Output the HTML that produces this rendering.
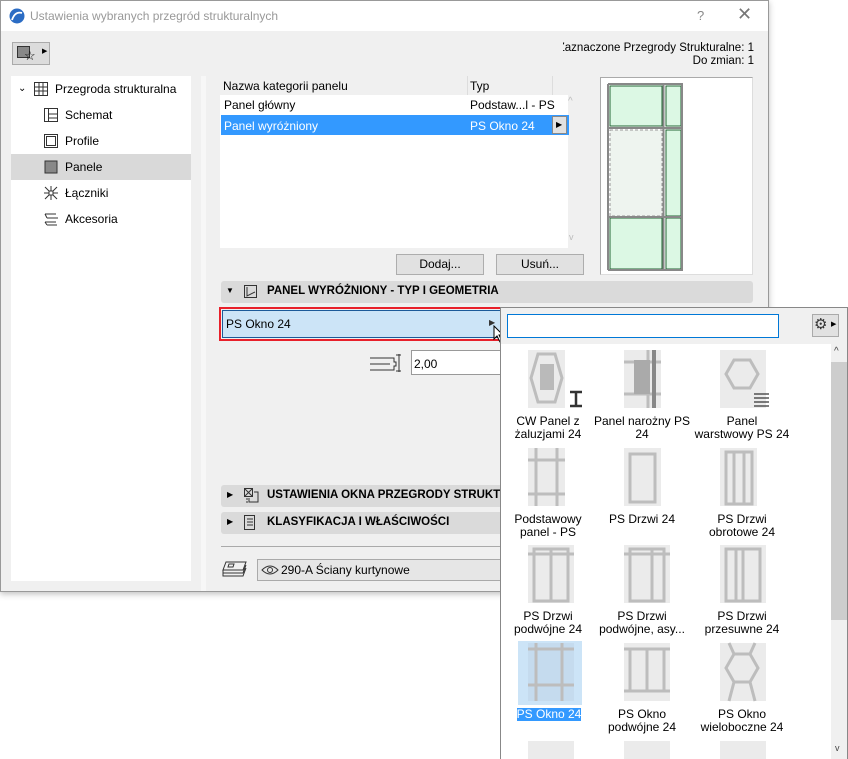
<!DOCTYPE html>
<html><head><meta charset="utf-8">
<style>
*{box-sizing:border-box;margin:0;padding:0}
body{width:848px;height:759px;background:#fff;position:relative;overflow:hidden;font-family:"Liberation Sans",sans-serif;font-size:12px;color:#000}
.a{position:absolute}
.t{position:absolute;white-space:nowrap;font-size:12px}
.hdr{position:absolute;background:#dadada;border-radius:3px;height:22px;font-weight:bold;font-size:11.5px}
.btn{position:absolute;background:#e1e1e1;border:1px solid #adadad;text-align:center;line-height:18px}
.lbl{position:absolute;width:100px;text-align:center;font-size:12px;line-height:13px}
</style></head><body>
<div class="a" style="left:0;top:0;width:769px;height:592px;background:#f0f0f0;border:1px solid #999;box-shadow:0 2px 6px rgba(0,0,0,.25)"></div>
<div class="a" style="top:1px;left:1px;width:767px;height:30px;background:#fff"></div>
<svg class="a" style="left:9px;top:8px" width="16" height="16"><circle cx="8" cy="8" r="7.5" fill="#2b6cc4"/><path d="M3 12 Q6 3 13 5" stroke="#fff" stroke-width="1.8" fill="none"/></svg>
<div class="t" style="left:30px;top:9px;color:#999;font-size:12px">Ustawienia wybranych przegród strukturalnych</div>
<div class="t" style="left:697px;top:8px;color:#888;font-size:13px">?</div>
<div class="t" style="left:737px;top:4px;color:#777;font-size:18px">✕</div>
<div class="a" style="left:12px;top:42px;width:38px;height:23px;background:#dcdcdc;border:1px solid #aaa"></div>
<div class="a" style="left:17px;top:46px;width:13px;height:12px;background:#888;border:1px solid #333"></div>
<div class="t" style="left:24px;top:48px;font-size:13px">☆</div>
<div class="t" style="left:42px;top:47px;font-size:7px">▶</div>
<div class="t" style="left:563px;top:42px;width:191px;text-align:right;font-size:11.5px;overflow:hidden;direction:rtl">Zaznaczone Przegrody Strukturalne: 1</div>
<div class="t" style="left:600px;top:55px;width:154px;text-align:right;font-size:11.5px">Do zmian: 1</div>
<div class="a" style="left:11px;top:76px;width:180px;height:505px;background:#fff"></div>
<div class="a" style="left:11px;top:154px;width:180px;height:26px;background:#d9d9d9"></div>
<div class="t" style="left:18px;top:83px;font-size:10px">⌄</div>
<svg class="a" style="left:33px;top:81px" width="16" height="16"><path d="M1.5 1.5h13v13h-13zM1.5 6h13M1.5 10h13M6 1.5v13M10 1.5v13" stroke="#333" fill="none"/></svg>
<div class="t" style="left:55px;top:82px">Przegroda strukturalna</div>
<svg class="a" style="left:43px;top:107px" width="16" height="16"><path d="M1.5 1.5h13v13h-13zM5.5 1.5v13M5.5 7h9M5.5 11h9" stroke="#333" fill="none"/></svg>
<div class="t" style="left:65px;top:108px">Schemat</div>
<svg class="a" style="left:43px;top:133px" width="16" height="16"><path d="M1.5 1.5h13v13h-13zM3.5 3.5h9v9h-9z" stroke="#333" fill="none"/></svg>
<div class="t" style="left:65px;top:134px">Profile</div>
<svg class="a" style="left:43px;top:159px" width="16" height="16"><rect x="2" y="2" width="12" height="12" fill="#888" stroke="#333"/></svg>
<div class="t" style="left:65px;top:160px">Panele</div>
<svg class="a" style="left:43px;top:185px" width="16" height="16"><path d="M2 2l12 12M14 2L2 14M8 1v14M1 8h14" stroke="#333" fill="none"/><rect x="6" y="6" width="4" height="4" fill="#fff" stroke="#333"/></svg>
<div class="t" style="left:65px;top:186px">Łączniki</div>
<svg class="a" style="left:43px;top:211px" width="16" height="16"><path d="M2 3h11M4 7h11M2 11h11M4 14h10M2 3l2 4M2 11l2 3" stroke="#333" fill="none"/></svg>
<div class="t" style="left:65px;top:212px">Akcesoria</div>
<div class="a" style="left:201px;top:76px;width:5px;height:515px;background:#f7f7f7"></div>
<div class="a" style="left:220px;top:76px;width:348px;height:172px;background:#fff"></div>
<div class="a" style="left:220px;top:76px;width:348px;height:19px;background:#f0f0f0"></div>
<div class="a" style="left:467px;top:76px;width:1px;height:19px;background:#ddd"></div>
<div class="a" style="left:552px;top:76px;width:1px;height:19px;background:#ddd"></div>
<div class="t" style="left:223px;top:79px">Nazwa kategorii panelu</div>
<div class="t" style="left:470px;top:79px">Typ</div>
<div class="t" style="left:224px;top:98px">Panel główny</div>
<div class="t" style="left:470px;top:98px">Podstaw...l - PS</div>
<div class="a" style="left:221px;top:115px;width:348px;height:20px;background:#3399ff"></div>
<div class="t" style="left:224px;top:119px;color:#fff">Panel wyróżniony</div>
<div class="t" style="left:470px;top:119px;color:#fff">PS Okno 24</div>
<div class="a" style="left:552px;top:116px;width:15px;height:18px;background:#e1e1e1;border:1px solid #888"></div>
<div class="t" style="left:556px;top:120px;font-size:8px">▶</div>
<div class="t" style="left:568px;top:96px;color:#bbb;font-size:10px">^</div>
<div class="t" style="left:569px;top:232px;color:#bbb;font-size:9px">v</div>
<div class="btn" style="left:396px;top:254px;width:88px;height:21px">Dodaj...</div>
<div class="btn" style="left:496px;top:254px;width:88px;height:21px">Usuń...</div>
<div class="a" style="left:600px;top:77px;width:153px;height:198px;background:#fff;border:1px solid #aaa;border-right-color:#ddd;border-bottom-color:#ddd"></div>
<svg class="a" style="left:600px;top:77px" width="153" height="198">
<rect x="10" y="9" width="52" height="40" fill="#dcf8e4" stroke="#226633"/>
<rect x="10" y="53" width="52" height="86" fill="#eef4ef" stroke="#999" stroke-dasharray="3 2"/>
<rect x="10" y="141" width="52" height="51" fill="#dcf8e4" stroke="#226633"/>
<rect x="66" y="9" width="15" height="40" fill="#dcf8e4" stroke="#226633"/>
<rect x="66" y="53" width="15" height="86" fill="#dcf8e4" stroke="#226633"/>
<rect x="66" y="141" width="15" height="51" fill="#dcf8e4" stroke="#226633"/>
<path d="M8 7h75M8 51h75M8 140h75M8 193h75M8 7v186M63.5 7v186M82 7v186" stroke="#888" stroke-width="2" fill="none"/>
</svg>
<div class="hdr" style="left:221px;top:281px;width:532px"></div>
<div class="t" style="left:226px;top:286px;font-size:8px">▼</div>
<svg class="a" style="left:243px;top:284px" width="15" height="15"><path d="M1.5 1.5h12v12h-12zM4 3v9l8-4" stroke="#333" fill="none"/></svg>
<div class="t" style="left:267px;top:285px;font-weight:bold;font-size:11.5px">PANEL WYRÓŻNIONY - TYP I GEOMETRIA</div>
<div class="a" style="left:219px;top:307px;width:285px;height:34px;border:2px solid #e8202a"></div>
<div class="a" style="left:222px;top:310px;width:279px;height:28px;background:#cce4f7;border:1px solid #1c5a99"></div>
<div class="t" style="left:226px;top:317px">PS Okno 24</div>
<div class="t" style="left:489px;top:318px;font-size:8px;color:#333">▶</div>
<svg class="a" style="left:493px;top:325px" width="12" height="18"><path d="M1 1v13l3-3 3 6 2-1-3-6h4z" fill="#fff" stroke="#000"/></svg>
<svg class="a" style="left:369px;top:352px" width="32" height="22"><path d="M1 6h24v4h2v4h-2v4H1M1 12h20" stroke="#333" fill="none"/><path d="M30 2v18M27 3h6M27 19h6" stroke="#333"/></svg>
<div class="a" style="left:411px;top:350px;width:90px;height:25px;background:#fff;border:1px solid #999"></div>
<div class="t" style="left:414px;top:357px">2,00</div>
<div class="hdr" style="left:221px;top:485px;width:290px"></div>
<div class="t" style="left:227px;top:490px;font-size:8px">▶</div>
<svg class="a" style="left:243px;top:487px" width="16" height="17"><path d="M1.5 1.5h8v8h-8zM1.5 1.5l8 8M9.5 1.5l-8 8M11 5h4v10H6v-4M3 12h2M3 15h2" stroke="#333" fill="none"/></svg>
<div class="t" style="left:267px;top:489px;font-weight:bold;font-size:11.5px">USTAWIENIA OKNA PRZEGRODY STRUKTURA</div>
<div class="hdr" style="left:221px;top:512px;width:290px"></div>
<div class="t" style="left:227px;top:517px;font-size:8px">▶</div>
<svg class="a" style="left:243px;top:514px" width="14" height="17"><path d="M1.5 1.5h10v14h-10zM4 5h6M4 8h6M4 11h6" stroke="#333" fill="none"/></svg>
<div class="t" style="left:267px;top:516px;font-weight:bold;font-size:11.5px">KLASYFIKACJA I WŁAŚCIWOŚCI</div>
<div class="a" style="left:221px;top:546px;width:290px;height:1px;background:#aaa"></div>
<svg class="a" style="left:222px;top:561px" width="26" height="17"><path d="M4 1h20l-3 8H1zM1 9v3h20l3-8M1 12v3h20l3-8M7 3h5l-1 3H6z" stroke="#333" fill="none"/></svg>
<div class="a" style="left:257px;top:559px;width:250px;height:22px;background:#e6e6e6;border:1px solid #aaa"></div>
<svg class="a" style="left:261px;top:564px" width="18" height="12"><path d="M1 6Q9 -2 17 6Q9 14 1 6z" stroke="#333" fill="none"/><circle cx="9" cy="6" r="2.5" stroke="#333" fill="none"/></svg>
<div class="t" style="left:281px;top:563px">290-A Ściany kurtynowe</div>
<div class="a" style="left:500px;top:307px;width:348px;height:452px;background:#f0f0f0;border:1px solid #888;border-bottom:none"></div>
<div class="a" style="left:507px;top:314px;width:272px;height:24px;background:#fff;border:1px solid #0078d7"></div>
<div class="a" style="left:812px;top:314px;width:27px;height:23px;background:#e1e1e1;border:1px solid #aaa"></div>
<div class="t" style="left:814px;top:315px;font-size:15px;color:#333">⚙</div>
<div class="t" style="left:831px;top:320px;font-size:7px">▶</div>
<div class="a" style="left:501px;top:344px;width:330px;height:415px;background:#fff"></div>
<div class="a" style="left:831px;top:344px;width:16px;height:415px;background:#f0f0f0"></div>
<div class="a" style="left:831px;top:362px;width:16px;height:258px;background:#cdcdcd"></div>
<div class="t" style="left:834px;top:346px;font-size:10px;color:#444">^</div>
<div class="t" style="left:835px;top:743px;font-size:9px;color:#444">v</div>
<div class="a" style="left:518px;top:641px;width:64px;height:64px;background:#cce4f7"></div>
<svg class="a" style="left:500px;top:344px" width="331" height="415">
<g fill="#ebebeb"><rect x="28" y="6" width="37" height="58"/><rect x="124" y="6" width="37" height="58"/><rect x="220" y="6" width="46" height="58"/>
<rect x="28" y="104" width="37" height="58"/><rect x="124" y="104" width="37" height="58"/><rect x="220" y="104" width="37" height="58"/>
<rect x="28" y="201" width="46" height="58"/><rect x="124" y="201" width="46" height="58"/><rect x="220" y="201" width="46" height="58"/>
<rect x="28" y="299" width="46" height="58" fill="#c5dbee"/><rect x="124" y="299" width="46" height="58"/><rect x="220" y="299" width="46" height="58"/>
<rect x="28" y="397" width="46" height="18"/><rect x="124" y="397" width="46" height="18"/><rect x="220" y="397" width="46" height="18"/></g>
<g stroke="#bdbdbd" stroke-width="3" fill="none">
<path d="M38 10h17l7 24-7 24H38l-7-24z"/><path d="M148 6v58M124 18h37M124 50h37"/>
<path d="M234 16h16l8 14-8 14h-16l-8-14z"/>
<path d="M36 104v58M57 104v58M28 116h37M28 150h37"/>
<path d="M130 110h25v48h-25z"/>
<path d="M226 108h26v52h-26zM234 108v52M244 108v52"/>
<path d="M34 205h34v52H34zM51 205v52M28 210h46"/>
<path d="M130 205h34v52h-34zM152 205v52M124 210h46"/>
<path d="M226 205h34v52h-34zM236 205v52M243 205v52"/>
<path d="M36 305h26v36H36zM28 305h46M28 341h46M36 299v58M62 299v58"/>
<path d="M130 305h34v42h-34zM147 305v42M124 305h46M124 347h46"/>
<path d="M234 310h16l8 14-8 14h-16l-8-14zM234 310l-5-11M250 310l5-11M234 338l-5 19M250 338l5 19"/>
</g>
<g fill="#999"><path d="M40 20h14v26H40z" opacity=".6"/><rect x="134" y="16" width="16" height="34" fill="#aaa"/><rect x="152" y="6" width="4" height="58" fill="#888"/></g>
<path d="M70 48h12M76 48v14M70 62h12" stroke="#333" stroke-width="2.5" fill="none"/>
<path d="M254 50h15M254 54h15M254 58h15M254 62h15" stroke="#333" stroke-width="1.2"/>
</svg>
<div class="lbl" style="left:498px;top:415px">CW Panel z<br>żaluzjami 24</div>
<div class="lbl" style="left:592px;top:415px">Panel narożny PS<br>24</div>
<div class="lbl" style="left:692px;top:415px">Panel<br>warstwowy PS 24</div>
<div class="lbl" style="left:498px;top:513px">Podstawowy<br>panel - PS</div>
<div class="lbl" style="left:592px;top:513px">PS Drzwi 24</div>
<div class="lbl" style="left:692px;top:513px">PS Drzwi<br>obrotowe 24</div>
<div class="lbl" style="left:498px;top:610px">PS Drzwi<br>podwójne 24</div>
<div class="lbl" style="left:592px;top:610px">PS Drzwi<br>podwójne, asy...</div>
<div class="lbl" style="left:692px;top:610px">PS Drzwi<br>przesuwne 24</div>
<div class="a" style="left:517px;top:708px;width:64px;height:13px;background:#3399ff"></div>
<div class="lbl" style="left:499px;top:708px;color:#fff">PS Okno 24</div>
<div class="lbl" style="left:592px;top:708px">PS Okno<br>podwójne 24</div>
<div class="lbl" style="left:692px;top:708px">PS Okno<br>wieloboczne 24</div>
</body></html>
